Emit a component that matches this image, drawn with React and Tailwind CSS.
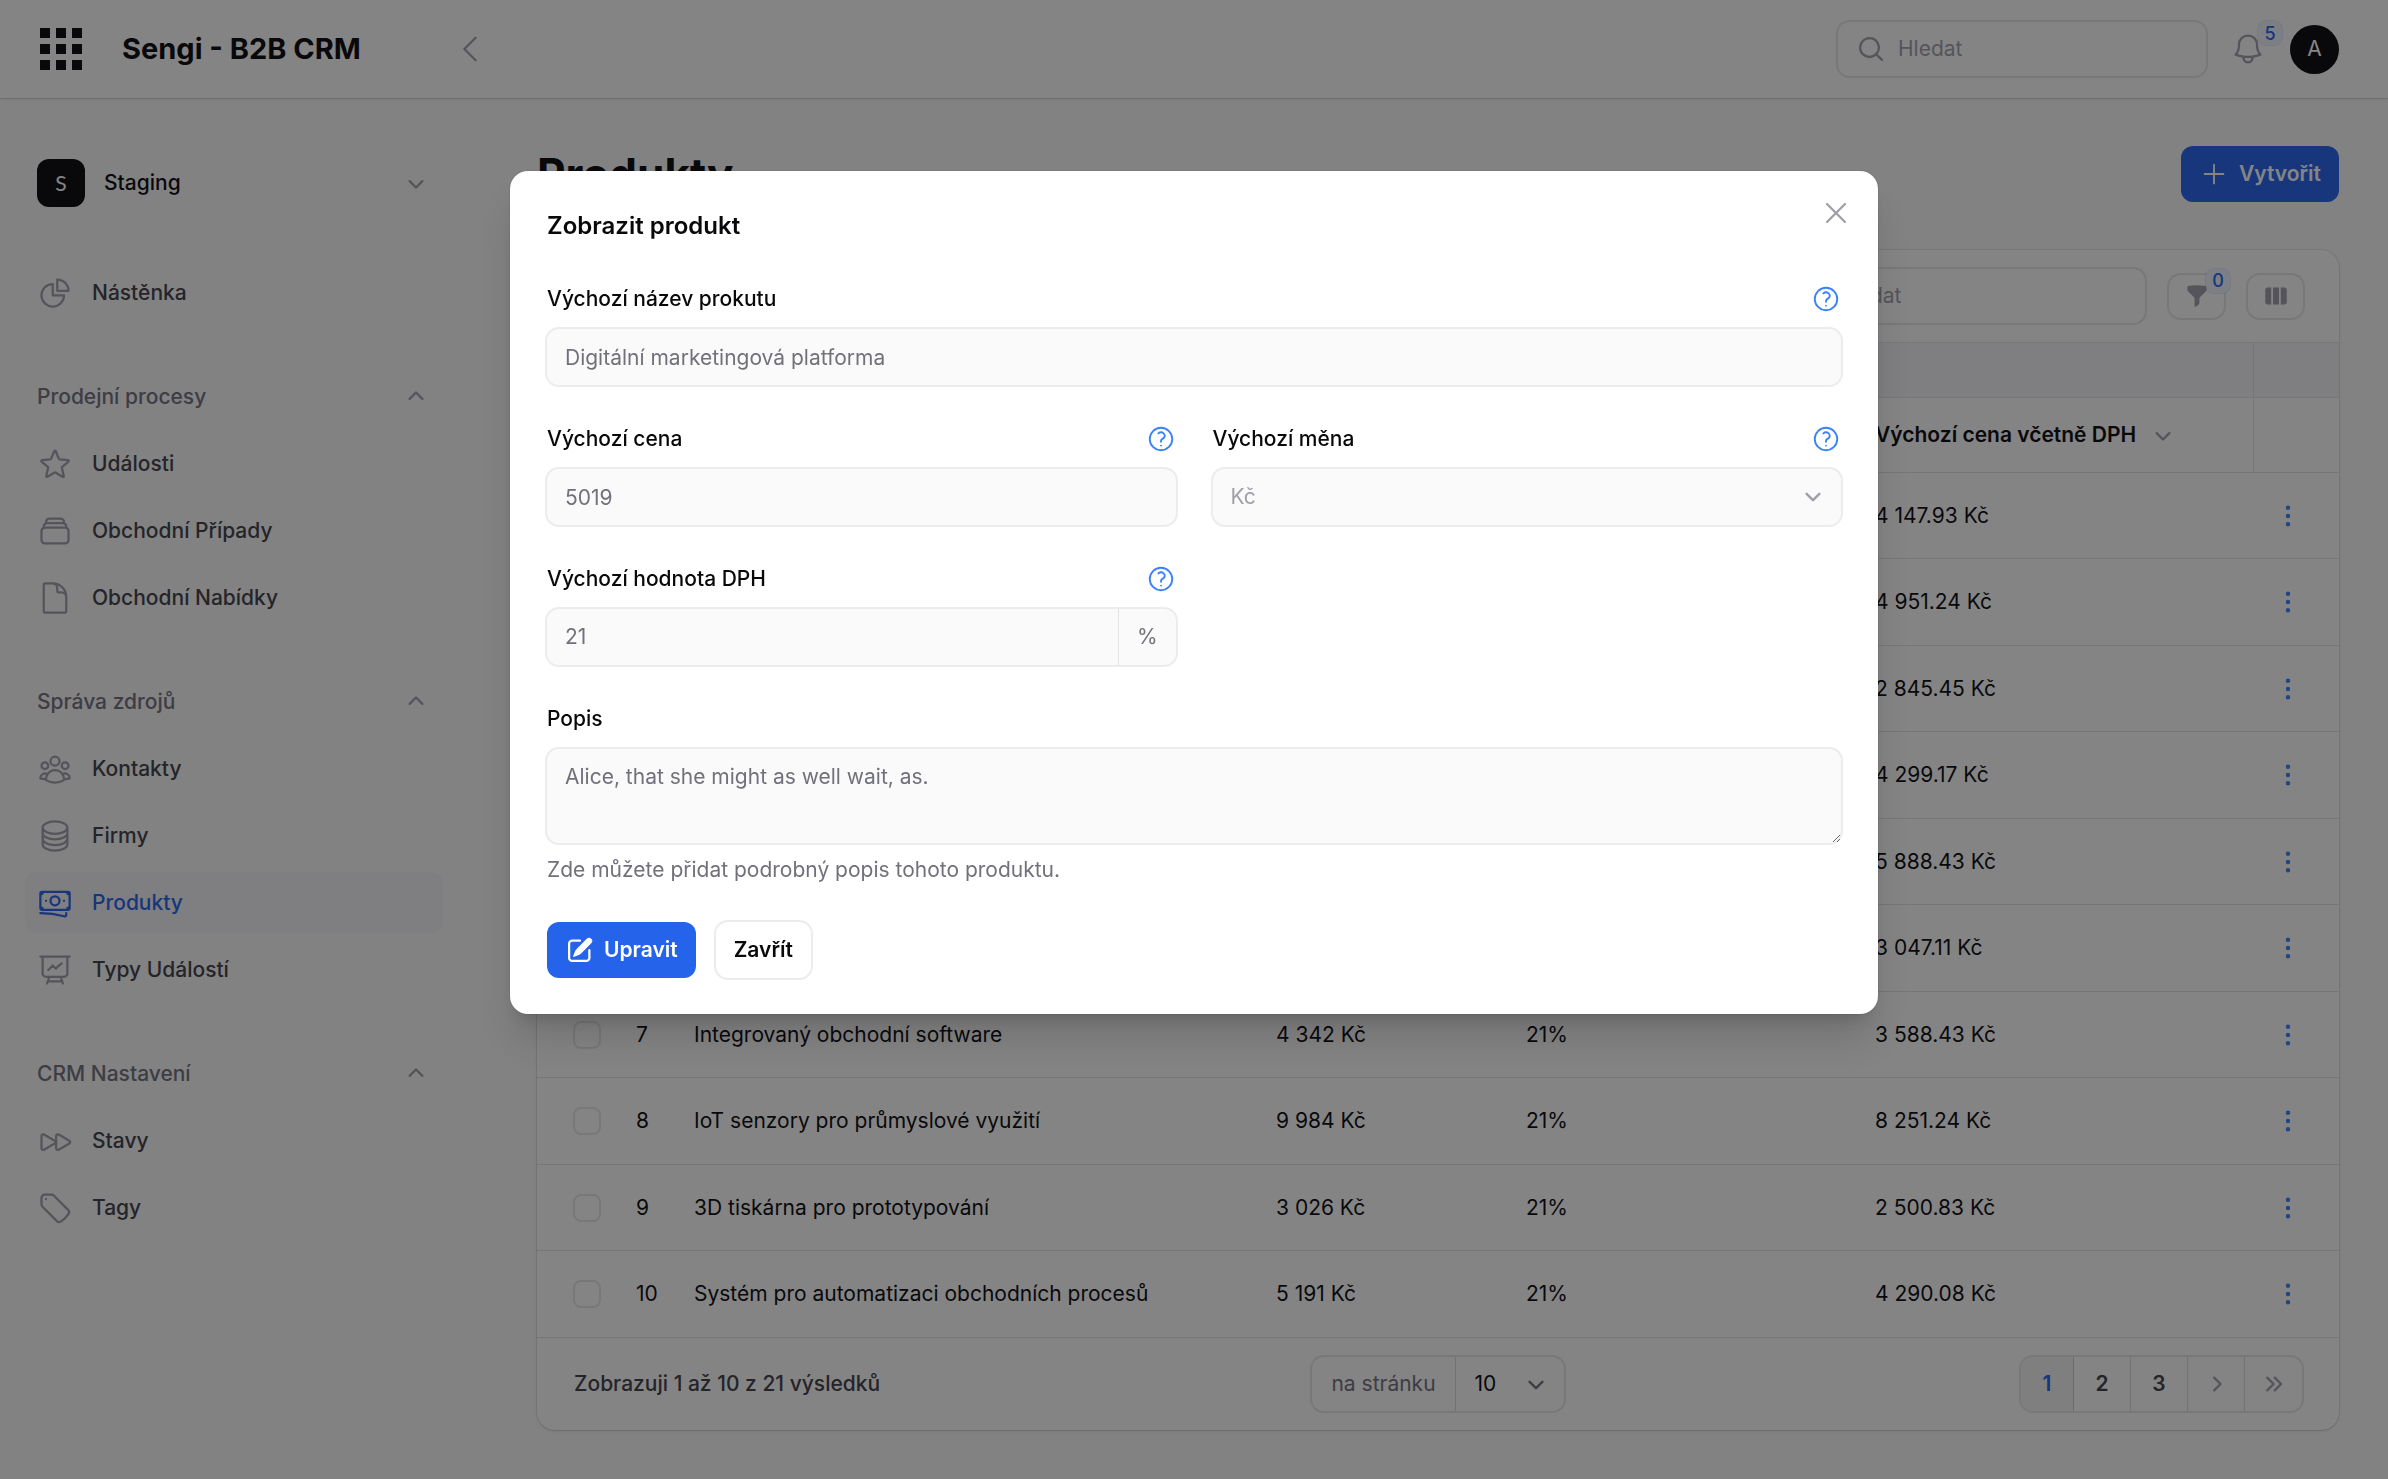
import React from "react";
import {
  HiMiniChevronDown,
  HiMiniChevronUp,
  HiMiniEllipsisVertical,
  HiMiniFunnel,
  HiMiniViewColumns,
  HiMiniPencilSquare,
  HiMiniChevronRight,
  HiMiniChevronDoubleRight,
  HiMiniMagnifyingGlass,
  HiOutlineBanknotes,
  HiOutlineBell,
  HiOutlineChartPie,
  HiOutlineChevronLeft,
  HiOutlineCircleStack,
  HiOutlineDocument,
  HiOutlineForward,
  HiOutlinePlus,
  HiOutlinePresentationChartLine,
  HiOutlineQuestionMarkCircle,
  HiOutlineRectangleStack,
  HiOutlineStar,
  HiOutlineTag,
  HiOutlineUserGroup,
  HiOutlineXMark,
} from "react-icons/hi2";

const groups = [
  { label: null, items: [{ label: "Nástěnka", icon: HiOutlineChartPie }] },
  {
    label: "Prodejní procesy",
    items: [
      { label: "Události", icon: HiOutlineStar },
      { label: "Obchodní Případy", icon: HiOutlineRectangleStack },
      { label: "Obchodní Nabídky", icon: HiOutlineDocument },
    ],
  },
  {
    label: "Správa zdrojů",
    items: [
      { label: "Kontakty", icon: HiOutlineUserGroup },
      { label: "Firmy", icon: HiOutlineCircleStack },
      { label: "Produkty", icon: HiOutlineBanknotes, active: true },
      { label: "Typy Událostí", icon: HiOutlinePresentationChartLine },
    ],
  },
  {
    label: "CRM Nastavení",
    items: [
      { label: "Stavy", icon: HiOutlineForward },
      { label: "Tagy", icon: HiOutlineTag },
    ],
  },
];

const rows = [
  [1, "Digitální marketingová platforma", "5 019 Kč", "4 147.93 Kč"],
  [2, "", "5 991 Kč", "4 951.24 Kč"],
  [3, "", "3 443 Kč", "2 845.45 Kč"],
  [4, "", "5 202 Kč", "4 299.17 Kč"],
  [5, "", "7 125 Kč", "5 888.43 Kč"],
  [6, "", "3 687 Kč", "3 047.11 Kč"],
  [7, "Integrovaný obchodní software", "4 342 Kč", "3 588.43 Kč"],
  [8, "IoT senzory pro průmyslové využití", "9 984 Kč", "8 251.24 Kč"],
  [9, "3D tiskárna pro prototypování", "3 026 Kč", "2 500.83 Kč"],
  [10, "Systém pro automatizaci obchodních procesů", "5 191 Kč", "4 290.08 Kč"],
];

const fieldBox =
  "w-full rounded-xl bg-zinc-50 px-[18px] text-[21px] text-zinc-500 ring-2 ring-zinc-950/8 outline-none";

function Logo() {
  const steps = [0, 16, 32];
  return (
    <svg viewBox="0 0 42 42" className="size-[42px] fill-zinc-950" aria-hidden="true">
      {steps.map((y) => steps.map((x) => <rect key={`${x}-${y}`} x={x} y={y} width="10" height="10" />))}
    </svg>
  );
}

function SelectArrow({ className }) {
  return (
    <svg viewBox="0 0 20 20" fill="none" className={`pointer-events-none size-8 ${className}`} aria-hidden="true">
      <path d="M6 8l4 4 4-4" stroke="currentColor" strokeWidth="1.5" strokeLinecap="round" strokeLinejoin="round" />
    </svg>
  );
}

function Badge({ children, className }) {
  return (
    <span
      className={`absolute flex h-6 w-6 items-center justify-center rounded-lg bg-[#eff6ff] text-[18px] font-medium text-[#2563eb] ring-1 ring-[#2563eb]/15 ${className}`}
    >
      {children}
    </span>
  );
}

function SearchBox({ id }) {
  return (
    <div className="flex h-[54px] w-[368px] items-center gap-3 rounded-xl bg-white pl-[18px] ring-2 ring-zinc-950/10">
      <label htmlFor={id} aria-label="Hledat">
        <HiMiniMagnifyingGlass className="size-[30px] text-zinc-400" />
      </label>
      <input
        id={id}
        type="search"
        placeholder="Hledat"
        className="min-w-0 flex-1 bg-transparent text-[21px] outline-none placeholder:text-zinc-400"
      />
    </div>
  );
}

function Header() {
  return (
    <header className="flex h-[98px] items-center justify-between bg-white pr-[49px] shadow-sm ring-1 ring-zinc-950/8">
      <div className="flex w-[488px] items-center pl-[40px]">
        <Logo />
        <a href="#" className="ml-10 text-[29px] leading-9 font-bold text-zinc-950">
          Sengi - B2B CRM
        </a>
        <button type="button" aria-label="Sbalit menu" className="ml-auto text-zinc-400">
          <HiOutlineChevronLeft className="size-9" />
        </button>
      </div>
      <div className="flex items-center gap-6">
        <SearchBox id="global-search" />
        <button type="button" aria-label="Oznámení" className="relative text-zinc-400">
          <HiOutlineBell className="size-9" />
          <Badge className="-top-2.5 -right-4">5</Badge>
        </button>
        <button
          type="button"
          aria-label="Uživatel"
          className="flex size-[49px] items-center justify-center rounded-full bg-zinc-950 text-[21px] text-white"
        >
          A
        </button>
      </div>
    </header>
  );
}

function Sidebar() {
  return (
    <nav className="flex w-[488px] shrink-0 flex-col gap-[43px] py-12 pr-[45px] pl-[25px]">
      <button type="button" className="flex h-[73px] items-center px-3 text-left text-[21px] font-medium text-zinc-950">
        <span className="flex size-12 items-center justify-center rounded-xl bg-zinc-950 font-[Lato,sans-serif] font-normal text-white">S</span>
        <span className="ml-[19px] flex-1">Staging</span>
        <HiMiniChevronDown className="size-[30px] text-zinc-400" />
      </button>
      {groups.map((group, i) => (
        <div key={i} className="flex flex-col gap-[6px]">
          {group.label && (
            <button type="button" className="flex h-[61px] items-center justify-between px-3 text-[21px] font-medium text-zinc-500">
              {group.label}
              <HiMiniChevronUp className="size-[30px] text-zinc-400" />
            </button>
          )}
          <ul className="flex flex-col gap-[6px]">
            {group.items.map(({ label, icon: Icon, active }) => (
              <li key={label}>
                <a
                  href="#"
                  className={`flex h-[61px] items-center gap-[19px] rounded-xl px-3 text-[21px] font-medium ${
                    active ? "bg-[#f4f4f6] text-[#2563eb]" : "text-zinc-700"
                  }`}
                >
                  <Icon className={`size-9 ${active ? "text-[#2563eb]" : "text-zinc-400"}`} />
                  {label}
                </a>
              </li>
            ))}
          </ul>
        </div>
      ))}
    </nav>
  );
}

function ProductTable() {
  return (
    <table className="w-full table-fixed border-separate border-spacing-0 text-left text-[21px] text-zinc-950">
      <colgroup>
        <col className="w-[81px]" />
        <col className="w-[58px]" />
        <col />
        <col className="w-[250px]" />
        <col className="w-[349px]" />
        <col className="w-[396px]" />
        <col className="w-[86px]" />
      </colgroup>
      <thead>
        <tr className="h-14 bg-[#f4f4f6]">
          <td colSpan={6} className="border-y border-zinc-200" />
          <td className="border-y border-l border-zinc-200" />
        </tr>
        <tr className="h-[75px]">
          <th className="border-b border-zinc-200 pl-9">
            <input type="checkbox" aria-label="Vybrat vše" className="block size-7 appearance-none rounded-lg border-2 border-zinc-950/10" />
          </th>
          <th className="border-b border-zinc-200" />
          <th className="border-b border-zinc-200" />
          <th className="border-b border-zinc-200" />
          <th className="border-b border-zinc-200" />
          <th className="border-b border-zinc-200 pl-[18px] font-semibold">
            <button type="button" className="flex items-center gap-3">
              Výchozí cena včetně DPH
              <HiMiniChevronDown className="size-[30px] text-zinc-400" />
            </button>
          </th>
          <th className="border-b border-l border-zinc-200" />
        </tr>
      </thead>
      <tbody>
        {rows.map(([n, name, price, net]) => (
          <tr key={n} className="h-[86px] even:h-[87px]">
            <td className="border-b border-zinc-200 pl-9">
              <input type="checkbox" aria-label={`Vybrat ${n}`} className="block size-7 appearance-none rounded-lg border-2 border-zinc-950/10" />
            </td>
            <td className="border-b border-zinc-200 pl-[18px]">{n}</td>
            <td className="border-b border-zinc-200 pl-[18px]">{name}</td>
            <td className="border-b border-zinc-200 pl-[18px]">{price}</td>
            <td className="border-b border-zinc-200 pl-[18px]">21%</td>
            <td className="border-b border-zinc-200 pl-[18px]">{net}</td>
            <td className="border-b border-zinc-200 pl-5">
              <button type="button" aria-label="Akce" className="block text-[#3b82f6]">
                <HiMiniEllipsisVertical className="size-[30px]" />
              </button>
            </td>
          </tr>
        ))}
      </tbody>
    </table>
  );
}

function TableFooter() {
  return (
    <div className="grid h-[92px] grid-cols-[1fr_auto_1fr] items-center px-[37px] text-[21px]">
      <p className="font-medium text-zinc-700">Zobrazuji 1 až 10 z 21 výsledků</p>
      <div className="flex h-[54px] items-stretch rounded-xl ring-2 ring-zinc-950/10">
        <label htmlFor="per-page" className="flex items-center border-r border-zinc-950/15 px-[19px] text-zinc-500">
          na stránku
        </label>
        <div className="relative">
          <select id="per-page" className="h-full w-[108px] appearance-none bg-transparent px-[19px] text-zinc-950 outline-none">
            <option>10</option>
          </select>
          <SelectArrow className="absolute top-3 right-3 text-zinc-500" />
        </div>
      </div>
      <div className="flex h-[54px] divide-x divide-zinc-950/15 justify-self-end overflow-hidden rounded-xl font-semibold text-zinc-700 ring-2 ring-zinc-950/10">
        <button type="button" aria-current="page" className="w-[53px] bg-zinc-100 text-[#2563eb]">1</button>
        <button type="button" className="w-[57px]">2</button>
        <button type="button" className="w-[57px]">3</button>
        <button type="button" aria-label="Další" className="flex w-[57px] items-center justify-center text-zinc-400">
          <HiMiniChevronRight className="size-[30px]" />
        </button>
        <button type="button" aria-label="Poslední" className="flex w-[57px] items-center justify-center text-zinc-400">
          <HiMiniChevronDoubleRight className="size-[30px]" />
        </button>
      </div>
    </div>
  );
}

function ProductsPage() {
  return (
    <main className="flex min-w-0 flex-1 flex-col gap-12 px-[49px] py-12">
      <div className="flex items-center justify-between">
        <h1 className="text-[44px] leading-14 font-bold text-zinc-950">Produkty</h1>
        <button type="button" className="flex h-14 items-center gap-[10px] rounded-xl bg-[#2563eb] px-[18px] text-[21px] font-semibold text-white">
          <HiOutlinePlus className="size-[30px]" />
          Vytvořit
        </button>
      </div>
      <section className="overflow-hidden rounded-[18px] bg-white shadow-sm ring-1 ring-zinc-950/8">
        <div className="flex h-[92px] items-center justify-end gap-6 px-9">
          <SearchBox id="table-search" />
          <button type="button" aria-label="Filtr" className="relative flex h-[43px] w-[55px] items-center justify-center rounded-xl text-zinc-400 ring-2 ring-zinc-950/10">
            <HiMiniFunnel className="size-6" />
            <Badge className="-top-1.5 -right-1.5">0</Badge>
          </button>
          <button type="button" aria-label="Sloupce" className="flex h-[43px] w-[55px] items-center justify-center rounded-xl text-zinc-400 ring-2 ring-zinc-950/10">
            <HiMiniViewColumns className="size-6" />
          </button>
        </div>
        <ProductTable />
        <TableFooter />
      </section>
    </main>
  );
}

function Field({ id, label, help, className = "", children }) {
  return (
    <div className={`flex flex-col gap-3 ${className}`}>
      <div className="flex h-9 items-center justify-between">
        <label htmlFor={id} className="text-[21px] font-medium text-zinc-950">
          {label}
        </label>
        {help && (
          <button type="button" aria-label="Nápověda" className="text-[#3b82f6]">
            <HiOutlineQuestionMarkCircle className="size-[30px]" />
          </button>
        )}
      </div>
      {children}
    </div>
  );
}

function ProductModal() {
  return (
    <div className="fixed inset-0 grid grid-cols-1 grid-rows-[1fr_auto_3fr] justify-items-center bg-zinc-950/50 p-6">
      <div
        role="dialog"
        aria-modal="true"
        aria-labelledby="modal-title"
        className="relative row-start-2 flex w-full max-w-[1368px] flex-col gap-[37px] rounded-[18px] bg-white px-[37px] pt-[37px] pb-9 shadow-[0_30px_38px_-8px_rgba(0,0,0,0.15),0_12px_15px_-9px_rgba(0,0,0,0.15)] ring-1 ring-zinc-950/5"
      >
        <button type="button" aria-label="Zavřít okno" className="absolute top-6 right-6 text-zinc-400">
          <HiOutlineXMark className="size-9" />
        </button>
        <h2 id="modal-title" className="text-[24px] leading-9 font-semibold text-zinc-950">
          Zobrazit produkt
        </h2>
        <form className="grid grid-cols-2 gap-x-[37px] gap-y-9">
          <Field id="name" label="Výchozí název prokutu" help className="col-span-2">
            <input id="name" disabled defaultValue="Digitální marketingová platforma" className={`h-14 ${fieldBox}`} />
          </Field>
          <Field id="price" label="Výchozí cena" help>
            <input id="price" disabled defaultValue="5019" className={`h-14 ${fieldBox}`} />
          </Field>
          <Field id="currency" label="Výchozí měna" help>
            <div className="relative">
              <select
                id="currency"
                disabled
                className="h-14 w-full appearance-none rounded-xl bg-zinc-50 px-[18px] text-[21px] text-zinc-400 opacity-100 ring-2 ring-zinc-950/8 outline-none"
              >
                <option>Kč</option>
              </select>
              <SelectArrow className="absolute top-3 right-3 text-zinc-400" />
            </div>
          </Field>
          <Field id="vat" label="Výchozí hodnota DPH" help>
            <div className="flex h-14 items-stretch rounded-xl bg-zinc-50 text-[21px] text-zinc-500 ring-2 ring-zinc-950/8">
              <input id="vat" disabled defaultValue="21" className="min-w-0 flex-1 bg-transparent px-[18px] outline-none" />
              <span className="flex items-center border-l border-zinc-200 px-[18px]">%</span>
            </div>
          </Field>
          <Field id="description" label="Popis" className="col-span-2">
            <textarea
              id="description"
              disabled
              defaultValue="Alice, that she might as well wait, as."
              className={`block h-[94px] resize-y py-[10px] leading-9 ${fieldBox}`}
            />
            <p className="text-[21px] leading-[30px] text-zinc-500">Zde můžete přidat podrobný popis tohoto produktu.</p>
          </Field>
        </form>
        <div className="flex gap-5">
          <button type="button" className="flex h-14 items-center gap-[9px] rounded-xl bg-[#2563eb] px-[18px] text-[21px] font-semibold text-white">
            <HiMiniPencilSquare className="size-[30px]" />
            Upravit
          </button>
          <button type="button" className="h-14 rounded-xl px-[18px] text-[21px] font-semibold text-zinc-950 ring-2 ring-zinc-950/8">
            Zavřít
          </button>
        </div>
      </div>
    </div>
  );
}

export default function App() {
  return (
    <div className="min-h-screen bg-zinc-50 font-[Inter,sans-serif]">
      <Header />
      <div className="flex">
        <Sidebar />
        <ProductsPage />
      </div>
      <ProductModal />
    </div>
  );
}
